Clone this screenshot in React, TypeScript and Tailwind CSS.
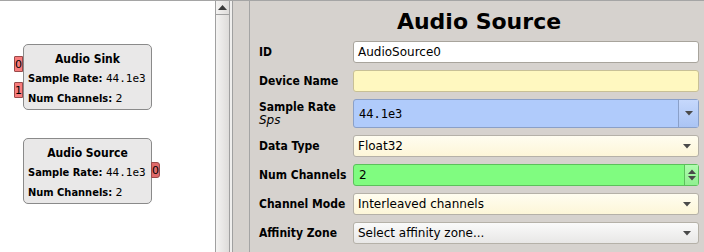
import React from 'react';

const sans = { fontFamily: '"DejaVu Sans", Verdana, sans-serif' };
const cond = { fontFamily: '"DejaVu Sans Condensed", "DejaVu Sans", sans-serif' };
const mono = { fontFamily: '"DejaVu Sans Mono", monospace' };

function Port({ label, side }: { label: string; side: 'in' | 'out' }) {
    return (
        <div
            className={
                'w-[9px] h-[16px] flex items-center justify-center text-[11px] leading-none text-black border border-[#9a4a4a] ' +
                (side === 'in' ? 'bg-[#f87c7c] rounded-l-[1px]' : 'bg-[#e06a6a] rounded-r-[3px]')
            }
        >
            {label}
        </div>
    );
}

function Block({ title, inputs, outputs, x, y }: { title: string; inputs: string[]; outputs: string[]; x: number; y: number }) {
    return (
        <div className="absolute" style={{ left: x, top: y }}>
            <div className="w-[129px] h-[66px] bg-[#e9e8e8] border border-[#8a8a8a] rounded-[5px] px-[4px] pt-[8px] text-[11px] leading-none text-black">
                <div className="text-center font-bold text-[12px]" style={cond}>{title}</div>
                <div className="mt-[8px] whitespace-nowrap">
                    <span className="font-bold" style={cond}>Sample Rate: </span>
                    <span className="text-[11px]" style={mono}>44.1e3</span>
                </div>
                <div className="mt-[9px] whitespace-nowrap">
                    <span className="font-bold" style={cond}>Num Channels: </span>2
                </div>
            </div>
            {inputs.map((p, i) => (
                <div key={p} className="absolute left-[-9px]" style={{ top: 12 + i * 26 }}>
                    <Port label={p} side="in" />
                </div>
            ))}
            {outputs.map((p) => (
                <div key={p} className="absolute left-[128px] top-[24px]">
                    <Port label={p} side="out" />
                </div>
            ))}
        </div>
    );
}

function Arrow() {
    return (
        <svg width="8" height="5" viewBox="0 0 8 5">
            <path d="M0 0 L8 0 L4 4.5 Z" fill="#4a4a4a" />
        </svg>
    );
}

function Row({ label, sub, children, h = 'h-[22px]' }: { label: string; sub?: string; children: React.ReactNode; h?: string }) {
    return (
        <div className={'flex items-center ' + h}>
            <div className="w-[94px] shrink-0 text-[12px] leading-[14px] text-black whitespace-nowrap">
                <div className="font-bold" style={cond}>{label}</div>
                {sub && <div className="italic text-[12px] leading-[13px]">{sub}</div>}
            </div>
            <div className="flex-1 h-full">{children}</div>
        </div>
    );
}

function Combo({ text, bg }: { text: string; bg: string }) {
    return (
        <div className={'h-full flex items-center justify-between pl-[4px] pr-[7px] rounded-[3px] border border-[#b5b1a8] text-[12px] text-black ' + bg}>
            <span>{text}</span>
            <Arrow />
        </div>
    );
}

export default function App() {
    return (
        <div className="w-[704px] h-[252px] flex border-t border-[#a5a5a5] bg-[#d6d2ce] overflow-hidden" style={sans}>
            <div className="w-[215px] h-full bg-white relative">
                <Block title="Audio Sink" inputs={['0', '1']} outputs={[]} x={23} y={43} />
                <Block title="Audio Source" inputs={[]} outputs={['0']} x={23} y={137} />
            </div>
            <div className="w-[14px] h-full border-l border-[#a0a0a0] bg-gradient-to-r from-[#f4f3f2] to-[#dedcda] flex flex-col">
                <div className="h-[14px] border-b border-[#a0a0a0] flex items-center justify-center">
                    <svg width="9" height="5" viewBox="0 0 9 5">
                        <path d="M0 5 L9 5 L4.5 0 Z" fill="#3a3a3a" />
                    </svg>
                </div>
            </div>
            <div className="w-[4px] h-full border-x border-[#a0a0a0] bg-[#f0efee]" />
            <div className="w-[17px] h-full border-r border-[#a5a5a5] bg-[#d6d2ce]" />
            <div className="flex-1 h-full pl-[9px] pr-[5px]">
                <div className="h-[40px] flex items-center justify-center pt-[1px] text-[22px] font-bold text-black">Audio Source</div>
                <div className="flex flex-col gap-[7px]">
                    <Row label="ID">
                        <div className="h-full flex items-center px-[4px] bg-white border border-[#a8a49c] rounded-[3px] text-[12px] text-black">AudioSource0</div>
                    </Row>
                    <Row label="Device Name">
                        <div className="h-full bg-[#fff8c0] border border-[#c8c096] rounded-[3px]" />
                    </Row>
                    <Row label="Sample Rate" sub="Sps" h="h-[29px]">
                        <div className="h-full flex bg-[#b0cbfb] border border-[#8aa0c8] rounded-[3px]">
                            <div className="flex-1 flex items-center px-[5px] text-[12px] text-black" style={mono}>44.1e3</div>
                            <div className="w-[20px] border-l border-[#8aa0c8] bg-gradient-to-b from-[#c6d8fc] to-[#aac4f4] flex items-center justify-center">
                                <Arrow />
                            </div>
                        </div>
                    </Row>
                    <Row label="Data Type">
                        <Combo text="Float32" bg="bg-gradient-to-b from-[#fffdf0] to-[#fdf6d8]" />
                    </Row>
                    <Row label="Num Channels">
                        <div className="h-full flex bg-[#80fc80] border border-[#5cc05c] rounded-[3px]">
                            <div className="flex-1 flex items-center px-[5px] text-[12px] text-black">2</div>
                            <div className="w-[14px] border-l border-[#5cc05c] bg-gradient-to-b from-[#b0fcb0] to-[#90f090] flex flex-col items-center justify-center gap-[2px]">
                                <svg width="8" height="5" viewBox="0 0 8 5">
                                    <path d="M0 5 L8 5 L4 0.5 Z" fill="#4a4a4a" />
                                </svg>
                                <Arrow />
                            </div>
                        </div>
                    </Row>
                    <Row label="Channel Mode">
                        <Combo text="Interleaved channels" bg="bg-gradient-to-b from-[#fffdf0] to-[#fdf6d8]" />
                    </Row>
                    <Row label="Affinity Zone">
                        <Combo text="Select affinity zone..." bg="bg-gradient-to-b from-[#fafafa] to-[#e8e7e6]" />
                    </Row>
                </div>
            </div>
        </div>
    );
}
